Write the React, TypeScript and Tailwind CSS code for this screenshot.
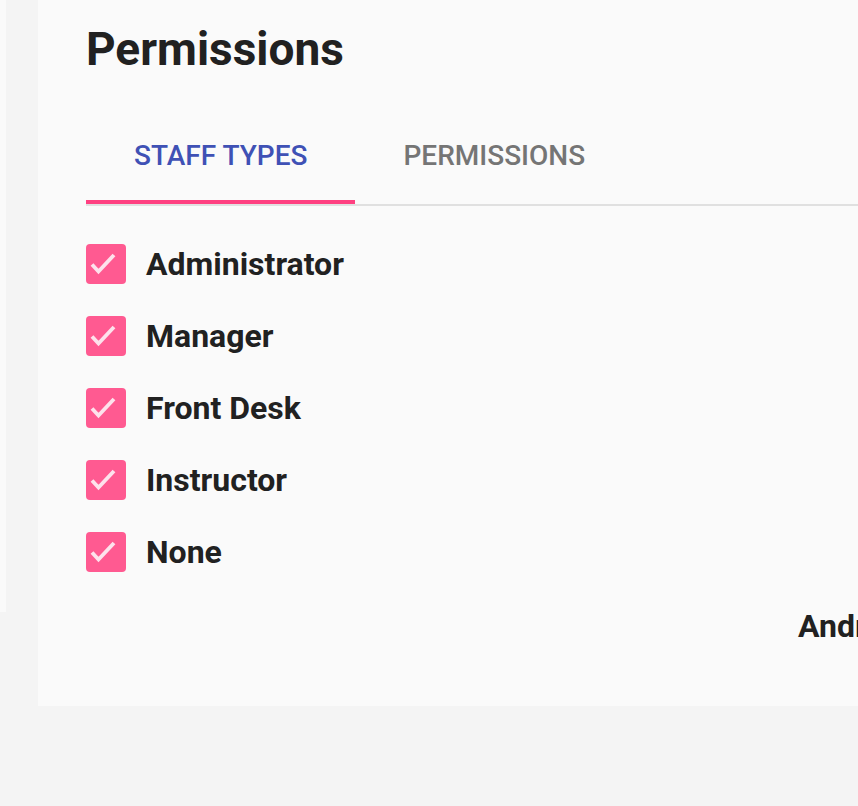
import React from "react";

const staffTypes = ["Administrator", "Manager", "Front Desk", "Instructor", "None"];

const CheckBox: React.FC = () => (
  <div className="w-10 h-10 rounded-[4px] bg-[#ff5a91] shrink-0">
    <svg viewBox="0 0 40 40" className="w-10 h-10">
      <path
        d="M6 20.5 L12.5 27.5 L28 11"
        fill="none"
        stroke="#fde2ec"
        strokeWidth="3.8"
      />
    </svg>
  </div>
);

const App: React.FC = () => {
  return (
    <div
      className="w-[858px] h-[806px] bg-[#f4f4f4] flex items-start overflow-hidden"
      style={{ fontFamily: "Roboto, 'Liberation Sans', sans-serif" }}
    >
      <div className="w-[6px] h-[612px] bg-[#fafafa] shrink-0" />
      <div className="w-[32px] shrink-0" />
      <div className="flex-1 min-w-0 h-[706px] bg-[#fafafa] pl-12 pt-[21px]">
        <h1 className="text-[46px] leading-[56px] font-bold text-[#212121]">
          Permissions
        </h1>

        <div className="mt-[31px] flex border-b-2 border-[#e0e0e0]">
          <div className="relative h-[96px] px-12 flex items-center text-[28px] font-medium uppercase text-[#3f51b5]">
            Staff Types
            <div className="absolute left-0 right-0 bottom-0 h-1 bg-[#ff4081]" />
          </div>
          <div className="h-[96px] px-12 flex items-center text-[28px] font-medium uppercase text-[#757575]">
            Permissions
          </div>
        </div>

        <div className="mt-[38px] flex flex-col gap-8">
          {staffTypes.map((t) => (
            <div key={t} className="flex items-center gap-5 h-10">
              <CheckBox />
              <span className="text-[32px] font-bold text-[#212121] leading-none -mt-px">
                {t}
              </span>
            </div>
          ))}
        </div>

        <div className="mt-[34px] ml-[712px] whitespace-nowrap text-[32px] font-bold text-[#212121] leading-[40px]">
          Andrew
        </div>
      </div>
    </div>
  );
};

export default App;
